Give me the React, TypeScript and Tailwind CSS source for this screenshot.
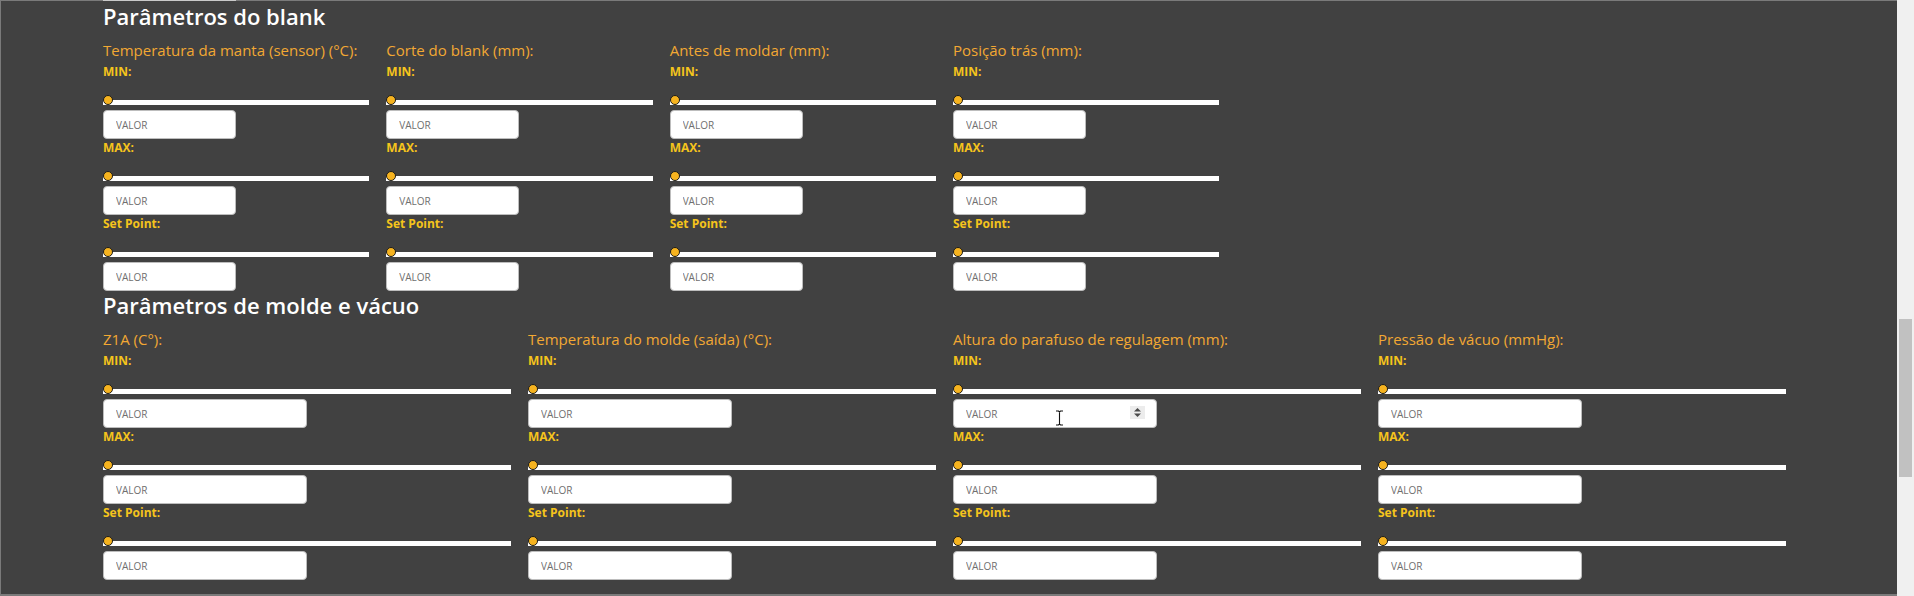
import React from "react";

const FONT = { fontFamily: '"Open Sans", "Noto Sans", "Liberation Sans", sans-serif' };

function Slider() {
  return (
    <div className="relative mt-[15px] flex h-[10px] items-end">
      <div className="h-[5px] w-full bg-white" />
      <div className="absolute left-0 top-0 h-[10px] w-[10px] rounded-full border border-[#1b1b1b] bg-[#f6b31f]" />
    </div>
  );
}

function Spinner() {
  return (
    <svg
      className="absolute right-[12px] top-[7px]"
      width="15"
      height="13"
      viewBox="0 0 15 13"
    >
      <rect x="0" y="0" width="15" height="13" fill="#ececec" />
      <path d="M4 5.5 L7.5 2 L11 5.5 Z" fill="#4a4a4a" />
      <path d="M4 7.5 L7.5 11 L11 7.5 Z" fill="#4a4a4a" />
    </svg>
  );
}

function IBeam() {
  return (
    <svg
      className="absolute left-[102px] top-[11px]"
      width="9"
      height="16"
      viewBox="0 0 9 16"
    >
      <path
        d="M1 1 H3.5 L4.5 2 L5.5 1 H8 M4.5 2 V14 M1 15 H3.5 L4.5 14 L5.5 15 H8"
        stroke="#ffffff"
        strokeWidth="2.6"
        fill="none"
      />
      <path
        d="M1 1 H3.5 L4.5 2 L5.5 1 H8 M4.5 2 V14 M1 15 H3.5 L4.5 14 L5.5 15 H8"
        stroke="#111111"
        strokeWidth="1.1"
        fill="none"
      />
    </svg>
  );
}

function ValueInput({ hovered }: { hovered?: boolean }) {
  return (
    <div className="relative mt-[5px] h-[29px] w-1/2">
      <input
        type="text"
        placeholder="VALOR"
        className="h-[29px] w-full rounded-[4px] border border-[#bdbdbd] bg-white pl-[12px] text-[10px] text-[#333] outline-none placeholder:text-[#6f6f6f]"
        style={FONT}
      />
      {hovered && <Spinner />}
      {hovered && <IBeam />}
    </div>
  );
}

function Field({ label, hovered }: { label: string; hovered?: boolean }) {
  const keys = ["MIN:", "MAX:", "Set Point:"];
  return (
    <div className="pr-[17px]">
      <div className="h-[20px] whitespace-nowrap text-[15px] leading-[20px] text-[#f2a833]">
        {label}
      </div>
      {keys.map((k, i) => (
        <div key={k} className={i === 0 ? "mt-[4px]" : "mt-px"}>
          <div className="h-4 text-[12px] font-bold leading-4 text-[#f5c41c]">{k}</div>
          <Slider />
          <ValueInput hovered={hovered && i === 0} />
        </div>
      ))}
    </div>
  );
}

function Title({ children }: { children: React.ReactNode }) {
  return (
    <h2 className="h-[28px] whitespace-nowrap text-[22px] font-semibold leading-[28px] text-white">
      {children}
    </h2>
  );
}

export default function App() {
  return (
    <div className="flex h-[596px] w-[1914px] overflow-hidden bg-[#f0f0f0]" style={FONT}>
      <div className="flex h-[596px] w-[1897px] flex-col border-b-2 border-l border-[#7a7a7a] bg-[#414141]">
        <div className="h-px w-full bg-[#7a7a7a]">
          <div className="ml-[102px] h-px w-[133px] bg-[#c9c9c9]" />
        </div>
        <div className="pl-[102px] pt-px">
          <div className="w-[1700px]">
            <Title>Parâmetros do blank</Title>
            <div className="mt-[10px] grid grid-cols-6">
              <Field label="Temperatura da manta (sensor) (°C):" />
              <Field label="Corte do blank (mm):" />
              <Field label="Antes de moldar (mm):" />
              <Field label="Posição trás (mm):" />
            </div>
            <Title>Parâmetros de molde e vácuo</Title>
            <div className="mt-[10px] grid grid-cols-4">
              <Field label="Z1A (C°):" />
              <Field label="Temperatura do molde (saída) (°C):" />
              <Field label="Altura do parafuso de regulagem (mm):" hovered />
              <Field label="Pressão de vácuo (mmHg):" />
            </div>
          </div>
        </div>
      </div>
      <div className="flex h-[596px] w-[17px] flex-col bg-[#f0f0f0]">
        <div className="ml-[2px] mt-[319px] h-[158px] w-[13px] bg-[#c1c1c1]" />
      </div>
    </div>
  );
}
